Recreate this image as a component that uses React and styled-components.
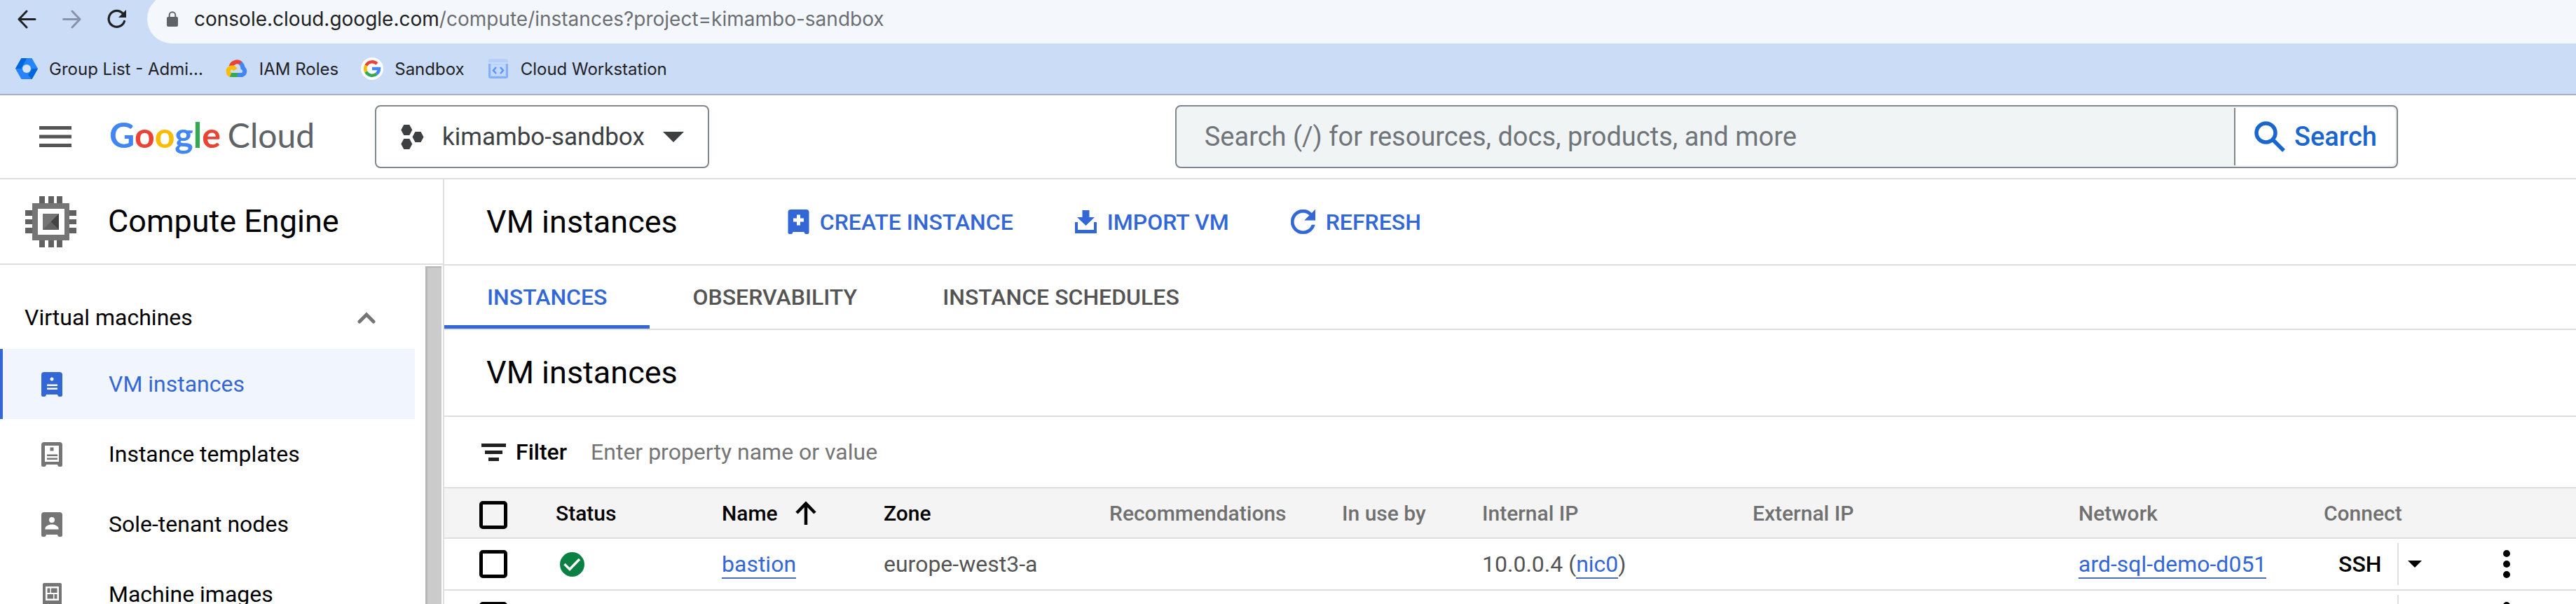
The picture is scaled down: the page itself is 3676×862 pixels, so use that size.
import React from "react";
import styled, { createGlobalStyle, css } from "styled-components";

const color = {
  text: "#000000",
  muted: "#757575",
  body: "#545454",
  blue: "#3367d6",
  line: "#dfdfdf",
  outline: "#80868b",
};

const GlobalStyle = createGlobalStyle`
  *, *::before, *::after { box-sizing: border-box; }
  body { margin: 0; background: #fff; color: ${color.text}; font-family: Roboto, "Open Sans", sans-serif; }
  h1, h2, h3, p, ul { margin: 0; padding: 0; font-weight: 400; }
  button, input { font-family: inherit; color: inherit; border: 0; background: none; padding: 0; margin: 0; border-radius: 0; outline: none; }
  button { cursor: pointer; text-align: left; }
  a { color: ${color.blue}; text-decoration: none; }
  svg { display: block; flex: none; }
`;

const Page = styled.div`
  display: flex;
  flex-direction: column;
  height: 100vh;
  overflow: hidden;
`;

/* Browser bars */
const BrowserChrome = styled.div`
  flex: none;
  background: #cbdcf6;
  border-bottom: 2px solid #a6b0cb;
  font-family: Inter, Roboto, sans-serif;
  color: #202124;
`;

const AddressRow = styled.div`
  display: flex;
  align-items: center;
  height: 70px;
  margin-top: -8px;
  padding-left: 25px;
`;

const NavButtons = styled.div`
  display: flex;
  align-items: center;
  gap: 37px;
  width: 185px;
`;

const AddressBar = styled.div`
  display: flex;
  align-items: center;
  gap: 23px;
  flex: 1;
  height: 70px;
  padding-left: 28px;
  border-radius: 35px 0 0 35px;
  background: #f4f7fc;
  font-size: 28px;
  white-space: nowrap;
`;

const UrlPath = styled.span`
  color: #6b6e73;
`;

const BookmarkBar = styled.nav`
  display: flex;
  align-items: center;
  gap: 32px;
  height: 72px;
  padding-left: 22px;
`;

const Bookmark = styled.a`
  display: flex;
  align-items: center;
  gap: 16px;
  font-size: 24px;
  color: #202124;
  white-space: nowrap;
`;

/* Console header */
const ConsoleHeader = styled.header`
  display: flex;
  align-items: center;
  flex: none;
  height: 120px;
  padding: 0 254px 0 56px;
  border-bottom: 2px solid ${color.line};
`;

const Brand = styled.div`
  display: flex;
  align-items: center;
  gap: 54px;
  flex: none;
  width: 479px;
`;

const Logo = styled.a`
  display: flex;
  align-items: baseline;
  gap: 10px;
  padding-bottom: 6px;
  font-family: Lato, sans-serif;
  font-size: 50px;
  font-weight: 700;
  line-height: 60px;
`;

const LogoLetter = styled.span`
  color: ${(p) => p.$color};
`;

const LogoProduct = styled.span`
  color: #5f6368;
  font-size: 48px;
  font-weight: 400;
`;

const ProjectPicker = styled.button`
  display: flex;
  align-items: center;
  flex: none;
  gap: 26px;
  height: 90px;
  padding: 0 34px 0 35px;
  border: 2px solid ${color.outline};
  border-radius: 8px;
  color: #3c4043;
  font-size: 35px;
`;

const SearchBox = styled.form`
  display: flex;
  flex: 1;
  min-width: 0;
  height: 90px;
  margin-left: 665px;
  padding: 2px 2px 2px 0;
  border: 2px solid ${color.outline};
  border-radius: 8px;
  background: #f1f4f5;
`;

const SearchInput = styled.input`
  flex: 1;
  min-width: 0;
  padding-left: 40px;
  font-size: 38px;
  &::placeholder { color: #70757a; opacity: 1; }
`;

const SearchButton = styled.button`
  display: flex;
  align-items: center;
  gap: 13px;
  width: 230px;
  padding-left: 27px;
  border-left: 2px solid ${color.outline};
  border-radius: 0 6px 6px 0;
  background: #fff;
  color: #1a66cf;
  font-size: 38px;
  font-weight: 500;
`;

/* Side navigation */
const Workspace = styled.div`
  display: flex;
  flex: 1;
  min-height: 0;
`;

const Sidebar = styled.aside`
  display: flex;
  flex-direction: column;
  flex: none;
  width: 634px;
  border-right: 2px solid ${color.line};
`;

const SidebarTitle = styled.div`
  display: flex;
  align-items: center;
  flex: none;
  gap: 45px;
  height: 122px;
  padding-left: 36px;
  border-bottom: 2px solid ${color.line};
`;

const Heading = styled.h2`
  font-size: 45px;
  line-height: 60px;
  white-space: nowrap;
`;

const SidebarBody = styled.div`
  display: flex;
  flex: 1;
  min-height: 0;
  padding-right: 2px;
`;

const NavList = styled.nav`
  flex: 1;
  margin-right: 15px;
  font-size: 32px;
`;

const SectionToggle = styled.button`
  display: flex;
  align-items: center;
  justify-content: space-between;
  width: 100%;
  height: 120px;
  padding: 30px 56px 0 35px;
  font-size: 32px;
`;

const NavItem = styled.a`
  display: grid;
  grid-template-columns: 96px 1fr;
  align-items: center;
  height: 100px;
  padding-left: 55px;
  border-left: 4px solid transparent;
  color: ${color.text};
  svg { color: ${color.muted}; }
  ${(p) =>
    p.$active &&
    css`
      border-left-color: ${color.blue};
      background: #f0f5fe;
      color: ${color.blue};
      svg { color: ${color.blue}; }
    `}
`;

const ScrollTrack = styled.div`
  flex: none;
  width: 23px;
  margin-top: 2px;
  border-top: 2px solid #b6b6b6;
  border-left: 3px solid #b6b6b6;
  background: #cbcbcb;
`;

/* Main panel */
const Main = styled.main`
  flex: 1;
  min-width: 0;
`;

const ActionBar = styled.div`
  display: flex;
  align-items: center;
  height: 123px;
  padding-left: 60px;
  border-bottom: 2px solid ${color.line};
`;

const Actions = styled.div`
  display: flex;
  gap: 88px;
  margin-left: 157px;
`;

const ActionButton = styled.button`
  display: flex;
  align-items: center;
  gap: 15px;
  color: ${color.blue};
  font-size: 32px;
  font-weight: 500;
  white-space: nowrap;
`;

const Tabs = styled.div`
  display: flex;
  height: 92px;
  border-bottom: 2px solid ${color.line};
`;

const Tab = styled.button`
  padding: 0 61px;
  color: ${(p) => (p.$active ? color.blue : color.body)};
  box-shadow: ${(p) => (p.$active ? `inset 0 -5px ${color.blue}` : "none")};
  font-size: 32px;
  font-weight: 500;
  white-space: nowrap;
`;

const SectionHead = styled.div`
  display: flex;
  align-items: center;
  height: 124px;
  padding-left: 60px;
  border-bottom: 2px solid ${color.line};
`;

const FilterBar = styled.div`
  display: flex;
  align-items: center;
  height: 102px;
  padding-left: 53px;
  border-bottom: 2px solid ${color.line};
  font-size: 32px;
`;

const FilterLabel = styled.label`
  display: flex;
  align-items: center;
  gap: 14px;
  font-weight: 500;
`;

const FilterInput = styled.input`
  flex: 1;
  min-width: 0;
  margin-left: 34px;
  font-size: 32px;
  &::placeholder { color: ${color.muted}; opacity: 1; }
`;

/* Instance table */
const Table = styled.table`
  width: 100%;
  border-collapse: separate;
  border-spacing: 0;
  table-layout: fixed;
  white-space: nowrap;
`;

const Column = styled.col`
  width: ${(p) => (p.$width ? `${p.$width}px` : "auto")};
`;

const HeadCell = styled.th`
  height: 72px;
  padding: ${(p) => (p.$check ? "6px 0 0 50px" : "0")};
  border-bottom: 2px solid ${color.line};
  background: #f4f4f4;
  color: ${(p) => (p.$sortable ? color.text : "#707070")};
  font-size: 30px;
  font-weight: 500;
  text-align: left;
`;

const SortButton = styled.button`
  display: flex;
  align-items: center;
  gap: 25px;
  font-size: 30px;
  font-weight: 500;
`;

const Cell = styled.td`
  height: 74px;
  padding: 0 0 0 ${(p) => p.$inset || 0}px;
  border-bottom: 2px solid ${color.line};
  color: ${color.body};
  font-size: 32px;
  line-height: 40px;
`;

const Checkbox = styled.input`
  display: block;
  appearance: none;
  width: 40px;
  height: 40px;
  border: 5px solid #000;
  border-radius: 5px;
`;

const CellLink = styled.a`
  border-bottom: 2px solid #4a6db5;
`;

const SplitButton = styled.div`
  display: flex;
  height: 60px;
`;

const ConnectButton = styled.button`
  width: 105px;
  padding-left: 21px;
  color: #000;
  font-size: 32px;
  font-weight: 500;
`;

const ConnectMenu = styled.button`
  width: 46px;
  padding-left: 13px;
  border-left: 2px solid ${color.line};
`;

const MenuButton = styled.button`
  display: block;
`;

/* Icons */
const ArrowIcon = ({ flip, stroke }) => (
  <svg width="27" height="27" viewBox="0 0 27 27" fill="none" stroke={stroke} strokeWidth="3" strokeLinecap="round" strokeLinejoin="round">
    {flip ? <path d="M1.5 13.5H25M14 2l11 11.500L14 25" /> : <path d="M25 13.500H2M13 2L2 13.500 13 25" />}
  </svg>
);

const ReloadIcon = () => (
  <svg width="28" height="28" viewBox="0 0 28 28" fill="none">
    <path d="M24.500 17.500A11.500 11.500 0 1 1 22.500 6.500" stroke="#202124" strokeWidth="3.200" strokeLinecap="round" />
    <path d="M27 1v11H16z" fill="#202124" />
  </svg>
);

const LockIcon = () => (
  <svg width="16" height="22" viewBox="0 0 16 22" fill="none">
    <rect y="8" width="16" height="14" rx="2" fill="#5f6368" />
    <path d="M3.700 9V5.500a4.300 4.300 0 0 1 8.600 0V9" stroke="#5f6368" strokeWidth="2" />
  </svg>
);

const AdminIcon = () => (
  <svg width="32" height="32" viewBox="0 0 32 32">
    <path d="M8.500 1h15L32 16l-8.500 15h-15L0 16z" fill="#2684fc" />
    <path d="M8.500 1h8l-5 8.500L8 16H0zM32 16l-8.500 15-5.500-6 6-9z" fill="#0066da" />
    <circle cx="16" cy="16" r="6" fill="#d5e4fa" />
  </svg>
);

const CloudIcon = () => (
  <svg width="32" height="32" viewBox="0 0 32 32" fill="none" strokeWidth="6">
    <path d="M7.500 13A9 9 0 0 1 22 8.500" stroke="#ea4335" />
    <path d="M21 8a9 9 0 0 1 3.500 7A5.500 5.500 0 0 1 23.500 25H16" stroke="#4285f4" />
    <path d="M17 25H9c-1.500 0-2-.2-3-.7" stroke="#34a853" />
    <path d="M7 25a5.600 5.600 0 0 1 .5-10.500c2.800-.8 5 .5 6.500 3" stroke="#fbbc04" />
  </svg>
);

const GoogleIcon = () => (
  <svg width="32" height="32" viewBox="0 0 32 32" fill="none" strokeWidth="4.500">
    <circle cx="16" cy="16" r="16" fill="#fff" />
    <path d="M7.300 11.500A10 10 0 0 1 23 9" stroke="#ea4335" />
    <path d="M7.300 20.500a10 10 0 0 1 0-9" stroke="#fbbc05" />
    <path d="M22.400 23.600a10 10 0 0 1-15.100-3.100" stroke="#34a853" />
    <path d="M16 16h10a10 10 0 0 1-3.600 7.600" stroke="#4285f4" />
  </svg>
);

const WorkstationIcon = () => (
  <svg width="32" height="32" viewBox="0 0 32 32" fill="none">
    <rect x="2" y="2" width="28" height="28" rx="3" fill="#b5cffa" />
    <path d="M2 8h28" stroke="#cbdcf6" strokeWidth="2" />
    <path d="M3.500 9v17.500q0 2 2 2h21q2 0 2-2V9" stroke="#85b0f7" strokeWidth="3" />
    <rect x="6" y="10" width="20" height="16" fill="#c3d8fb" />
    <path d="M13 14l-4 4.500 4 4.500M19 14l4 4.500-4 4.500" stroke="#5b95f5" strokeWidth="2.500" />
  </svg>
);

const HamburgerIcon = () => (
  <svg width="46" height="30" viewBox="0 0 46 30" fill="#545454">
    <path d="M0 0h46v5H0zM0 12.500h46v5H0zM0 25h46v5H0z" />
  </svg>
);

const ProjectIcon = () => (
  <svg width="33" height="35" viewBox="0 0 33 35" fill="#3c4043">
    <path d="M4.300 0h8l4 7.500-4 7.500h-8l-4-7.500zM20.500 10h8l4 7.500-4 7.500h-8l-4-7.500zM4.300 20h8l4 7.500-4 7.500h-8l-4-7.500z" />
  </svg>
);

const CaretIcon = ({ width, height, fill }) => (
  <svg width={width} height={height} viewBox="0 0 30 15" preserveAspectRatio="none" fill={fill}>
    <path d="M0 0h30L15 15z" />
  </svg>
);

const SearchIcon = () => (
  <svg width="44" height="44" viewBox="0 0 44 44" fill="none" stroke="#1a66cf" strokeWidth="5.500">
    <circle cx="16.500" cy="16.500" r="13.500" />
    <path d="M26 26l16 16" />
  </svg>
);

const ComputeIcon = () => (
  <svg width="73" height="73" viewBox="0 0 73 73">
    <path
      fill="#616161"
      d="M20 0h8v73h-8zM33 0h8v73h-8zM45 0h8v73h-8zM0 20h73v8H0zM0 33h73v7H0zM0 45h73v8H0z"
    />
    <path fill="#757575" d="M10 10h53v53H10z" />
    <path fill="#fff" d="M18 18h38v37H18z" />
    <path fill="#757575" d="M25 25h23v23H25z" />
    <path fill="#424242" d="M48 25v23L36.500 36.500z" />
    <path fill="#616161" d="M25 48h23L36.500 36.500z" />
  </svg>
);

const ChevronUpIcon = () => (
  <svg width="26" height="17" viewBox="0 0 26 17" fill="none" stroke="#757575" strokeWidth="5" strokeLinecap="round">
    <path d="M3 14L13 4l10 10" />
  </svg>
);

const serverBody = "M4 0h22q4 0 4 4v29q0 2-2 2h-3q-1.500 0-2-3H7q-.5 3-2 3H2q-2 0-2-2V4q0-4 4-4z";

const InstanceIcon = () => (
  <svg width="30" height="35" viewBox="0 0 30 35" fill="currentColor">
    <path d={serverBody} />
    <circle cx="15" cy="10" r="2.500" fill="#fff" />
    <path d="M8 17.500h15v2.500H8zM8 22.500h15V25H8z" fill="#fff" />
  </svg>
);

const TemplateIcon = () => (
  <svg width="30" height="35" viewBox="0 0 30 35" fill="currentColor">
    <path d={serverBody} />
    <path d="M5 5h20v23H5z" fill="#fff" />
    <path d="M12.500 7.500h5v5h-5zM8 17.500h15V20H8zM8 22.500h15V25H8z" />
  </svg>
);

const SoleTenantIcon = () => (
  <svg width="30" height="35" viewBox="0 0 30 35" fill="currentColor">
    <path d={serverBody} />
    <circle cx="15" cy="11" r="4" fill="#fff" />
    <path d="M5.500 24.500v-1.500c0-3.500 6-5.500 9.500-5.500s9.500 2 9.500 5.500v1.500z" fill="#fff" />
  </svg>
);

const MachineImageIcon = () => (
  <svg width="30" height="32" viewBox="0 0 30 32" fill="currentColor">
    <rect x="2" width="27" height="32" rx="2" />
    <path d="M6 5h19v20H6z" fill="#fff" />
    <path d="M8.500 7.500h4V14h-4zM14 7.500h8.500V14H14zM8.500 16H17v6.500H8.500zM18.500 16h4v6.500h-4z" />
  </svg>
);

const CreateIcon = () => (
  <svg width="31" height="35" viewBox="0 0 30 35" fill="currentColor">
    <path d={serverBody} />
    <path d="M12.500 7.500h5v5h5v5h-5v5h-5v-5h-5v-5h5z" fill="#fff" />
  </svg>
);

const ImportIcon = () => (
  <svg width="31" height="33" viewBox="0 0 31 33" fill="currentColor">
    <path d="M10.500 0h10v10H28L15.500 22 3 10h7.500z" />
    <path d="M0 17h4v11h23V17h4v16H0z" />
  </svg>
);

const RefreshIcon = () => (
  <svg width="35" height="35" viewBox="4 4 16 16" fill="currentColor" stroke="currentColor" strokeWidth=".2">
    <path d="M17.650 6.350A7.958 7.958 0 0 0 12 4c-4.420 0-7.990 3.580-7.990 8s3.570 8 7.990 8c3.730 0 6.840-2.550 7.730-6h-2.080A5.990 5.990 0 0 1 12 18c-3.310 0-6-2.690-6-6s2.690-6 6-6c1.660 0 3.140.69 4.220 1.780L13 11h7V4l-2.350 2.350z" />
  </svg>
);

const FilterIcon = () => (
  <svg width="35" height="25" viewBox="0 0 35 25" fill="#212121">
    <path d="M0 0h35v5H0zM5 10h25v5H5zM10 20h15v5H10z" />
  </svg>
);

const SortUpIcon = () => (
  <svg width="30" height="34" viewBox="0 0 30 34" fill="none" stroke="#000" strokeWidth="4.500">
    <path d="M15 34V4M2 17L15 3.500 28 17" />
  </svg>
);

const RunningIcon = () => (
  <svg width="35" height="35" viewBox="0 0 35 35" fill="none" role="img" aria-label="Running">
    <circle cx="17.500" cy="17.500" r="17.500" fill="#0b8043" />
    <path d="M6.500 17l7.500 7.500L28 10" stroke="#fff" strokeWidth="3.500" />
  </svg>
);

const MoreIcon = () => (
  <svg width="10" height="40" viewBox="0 0 10 40" fill="#000">
    <circle cx="5" cy="5" r="5" />
    <circle cx="5" cy="20" r="5" />
    <circle cx="5" cy="35" r="5" />
  </svg>
);

const bookmarks = [
  { label: "Group List - Admi...", Icon: AdminIcon },
  { label: "IAM Roles", Icon: CloudIcon },
  { label: "Sandbox", Icon: GoogleIcon },
  { label: "Cloud Workstation", Icon: WorkstationIcon },
];

const logoLetters = [
  ["G", "#4285f4"],
  ["o", "#ea4335"],
  ["o", "#fbbc04"],
  ["g", "#4285f4"],
  ["l", "#34a853"],
  ["e", "#ea4335"],
];

const navItems = [
  { label: "VM instances", Icon: InstanceIcon, active: true },
  { label: "Instance templates", Icon: TemplateIcon },
  { label: "Sole-tenant nodes", Icon: SoleTenantIcon },
  { label: "Machine images", Icon: MachineImageIcon },
];

const actions = [
  { label: "CREATE INSTANCE", Icon: CreateIcon },
  { label: "IMPORT VM", Icon: ImportIcon },
  { label: "REFRESH", Icon: RefreshIcon },
];

const tabs = ["INSTANCES", "OBSERVABILITY", "INSTANCE SCHEDULES"];

const columnWidths = [159, 237, 231, 322, 332, 200, 386, 465, 350, 240, null];

const plainColumns = ["Recommendations", "In use by", "Internal IP", "External IP", "Network", "Connect"];

const instances = [
  {
    id: 1,
    name: "bastion",
    zone: "europe-west3-a",
    ip: "10.0.0.4",
    nic: "nic0",
    network: "ard-sql-demo-d051",
    connect: "SSH",
  },
  { id: 2 },
];

function InstanceRow({ instance }) {
  const { name, zone, ip, nic, network, connect } = instance;
  return (
    <tr>
      <Cell $inset={50}>
        <Checkbox type="checkbox" aria-label="Select instance" />
      </Cell>
      <Cell $inset={6}>
        <RunningIcon />
      </Cell>
      <Cell>{name && <CellLink href="#instance">{name}</CellLink>}</Cell>
      <Cell>{zone}</Cell>
      <Cell />
      <Cell />
      <Cell>
        {ip && (
          <>
            {ip} (<CellLink href="#nic">{nic}</CellLink>)
          </>
        )}
      </Cell>
      <Cell />
      <Cell>{network && <CellLink href="#network">{network}</CellLink>}</Cell>
      <Cell>
        <SplitButton>
          <ConnectButton type="button" aria-label="Connect">{connect}</ConnectButton>
          <ConnectMenu type="button" aria-label="Connection options">
            <CaretIcon width={20} height={10} fill="#000" />
          </ConnectMenu>
        </SplitButton>
      </Cell>
      <Cell $inset={16}>
        <MenuButton type="button" aria-label="More actions">
          <MoreIcon />
        </MenuButton>
      </Cell>
    </tr>
  );
}

export default function App() {
  return (
    <Page>
      <GlobalStyle />
      <BrowserChrome>
        <AddressRow>
          <NavButtons>
            <button type="button" aria-label="Back"><ArrowIcon stroke="#202124" /></button>
            <button type="button" aria-label="Forward"><ArrowIcon flip stroke="#8793aa" /></button>
            <button type="button" aria-label="Reload"><ReloadIcon /></button>
          </NavButtons>
          <AddressBar>
            <LockIcon />
            <span>
              console.cloud.google.com<UrlPath>/compute/instances?project=kimambo-sandbox</UrlPath>
            </span>
          </AddressBar>
        </AddressRow>
        <BookmarkBar aria-label="Bookmarks">
          {bookmarks.map(({ label, Icon }) => (
            <Bookmark key={label} href="#bookmark">
              <Icon />
              {label}
            </Bookmark>
          ))}
        </BookmarkBar>
      </BrowserChrome>

      <ConsoleHeader>
        <Brand>
          <button type="button" aria-label="Navigation menu"><HamburgerIcon /></button>
          <Logo href="#home">
            <span>
              {logoLetters.map(([letter, tint], i) => (
                <LogoLetter key={i} $color={tint}>{letter}</LogoLetter>
              ))}
            </span>
            <LogoProduct>Cloud</LogoProduct>
          </Logo>
        </Brand>
        <ProjectPicker type="button">
          <ProjectIcon />
          kimambo-sandbox
          <CaretIcon width={30} height={15} fill="#3c4043" />
        </ProjectPicker>
        <SearchBox role="search">
          <SearchInput
            type="text"
            aria-label="Search"
            placeholder="Search (/) for resources, docs, products, and more"
          />
          <SearchButton type="button">
            <SearchIcon />
            Search
          </SearchButton>
        </SearchBox>
      </ConsoleHeader>

      <Workspace>
        <Sidebar>
          <SidebarTitle>
            <ComputeIcon />
            <Heading>Compute Engine</Heading>
          </SidebarTitle>
          <SidebarBody>
            <NavList aria-label="Compute Engine">
              <SectionToggle type="button" aria-expanded="true">
                Virtual machines
                <ChevronUpIcon />
              </SectionToggle>
              {navItems.map(({ label, Icon, active }) => (
                <NavItem key={label} href="#nav" $active={active}>
                  <Icon />
                  {label}
                </NavItem>
              ))}
            </NavList>
            <ScrollTrack />
          </SidebarBody>
        </Sidebar>

        <Main>
          <ActionBar>
            <Heading as="h1">VM instances</Heading>
            <Actions>
              {actions.map(({ label, Icon }) => (
                <ActionButton key={label} type="button">
                  <Icon />
                  {label}
                </ActionButton>
              ))}
            </Actions>
          </ActionBar>
          <Tabs role="tablist">
            {tabs.map((label, i) => (
              <Tab key={label} type="button" role="tab" aria-selected={i === 0} $active={i === 0}>
                {label}
              </Tab>
            ))}
          </Tabs>
          <SectionHead>
            <Heading>VM instances</Heading>
          </SectionHead>
          <FilterBar>
            <FilterLabel htmlFor="filter">
              <FilterIcon />
              Filter
            </FilterLabel>
            <FilterInput id="filter" type="text" placeholder="Enter property name or value" />
          </FilterBar>
          <Table>
            <colgroup>
              {columnWidths.map((width, i) => (
                <Column key={i} $width={width} />
              ))}
            </colgroup>
            <thead>
              <tr>
                <HeadCell $check>
                  <Checkbox type="checkbox" aria-label="Select all instances" />
                </HeadCell>
                <HeadCell $sortable>Status</HeadCell>
                <HeadCell $sortable>
                  <SortButton type="button">
                    Name
                    <SortUpIcon />
                  </SortButton>
                </HeadCell>
                <HeadCell $sortable>Zone</HeadCell>
                {plainColumns.map((label) => (
                  <HeadCell key={label}>{label}</HeadCell>
                ))}
                <HeadCell aria-label="Actions" />
              </tr>
            </thead>
            <tbody>
              {instances.map((instance) => (
                <InstanceRow key={instance.id} instance={instance} />
              ))}
            </tbody>
          </Table>
        </Main>
      </Workspace>
    </Page>
  );
}
